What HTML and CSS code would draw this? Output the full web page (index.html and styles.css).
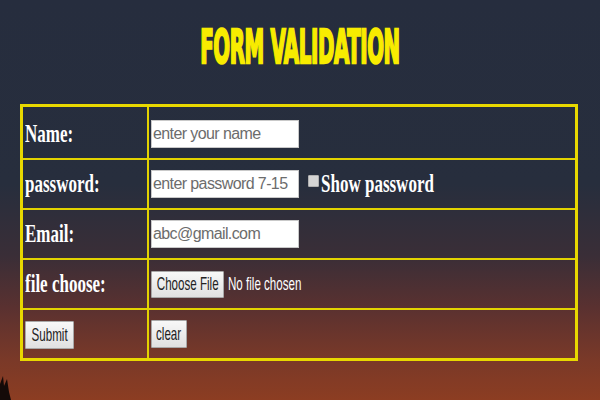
FILE: index.html
```html
<!DOCTYPE html>
<html>
<head>
<meta charset="utf-8">
<link rel="stylesheet" href="styles.css">
</head>
<body>
<h1 class="title"><span class="title-text">FORM VALIDATION</span></h1>
<table class="form-table">
  <tr class="first-row">
    <td class="label"><span class="narrow">Name:</span></td>
    <td class="field"><input class="text" type="text" placeholder="enter your name"></td>
  </tr>
  <tr>
    <td class="label"><span class="narrow">password:</span></td>
    <td class="field"><input class="text" type="password" placeholder="enter password 7-15"><input class="check" type="checkbox" id="show"><label class="show narrow" for="show">Show password</label></td>
  </tr>
  <tr>
    <td class="label"><span class="narrow">Email:</span></td>
    <td class="field"><input class="text" type="text" placeholder="abc@gmail.com"></td>
  </tr>
  <tr>
    <td class="label"><span class="narrow">file choose:</span></td>
    <td class="field"><label class="btn btn-file"><input class="file-input" type="file"><span class="btn-text">Choose File</span></label><span class="file-status">No file chosen</span></td>
  </tr>
  <tr>
    <td class="label"><button class="btn btn-submit"><span class="btn-text">Submit</span></button></td>
    <td class="field"><button class="btn btn-clear"><span class="btn-text">clear</span></button></td>
  </tr>
</table>
<svg class="corner" width="14" height="30" viewBox="0 0 14 30"><path d="M0 30 L0 14 L3 6 L4 16 L7 9 L9 22 L11 30 Z" fill="#140a08"/></svg>
</body>
</html>
```

FILE: styles.css
```css
html, body {
  margin: 0;
}
body {
  width: 600px;
  height: 400px;
  overflow: hidden;
  position: relative;
  background: linear-gradient(to bottom, #262d3e 0%, #272e3d 46%, #3a2e37 64%, #5a3130 77%, #7a3928 90%, #8c3d22 100%);
  font-family: "Liberation Serif", serif;
}
.title {
  margin: 0;
  height: 104px;
  box-sizing: border-box;
  padding-top: 25px;
  display: flex;
  justify-content: center;
  align-items: flex-start;
}
.title-text {
  display: inline-block;
  font-family: "DejaVu Sans Condensed", "DejaVu Sans", sans-serif;
  font-weight: bold;
  font-size: 22px;
  line-height: 1;
  color: #f8ec00;
  -webkit-text-stroke: 1.1px #f8ec00;
  letter-spacing: -0.4px;
  transform: scaleY(2.1);
  transform-origin: 50% 0;
}
.form-table {
  margin-left: 20px;
  width: 558px;
  border-collapse: collapse;
  border: 3px solid #e8d800;
}
.form-table td {
  border: 2px solid #e3d300;
  padding: 0 2px;
  height: 48px;
  vertical-align: middle;
  white-space: nowrap;
}
.form-table .first-row td {
  height: 48px;
  padding-top: 3px;
}
.label {
  width: 120px;
  color: #ffffff;
  font-weight: bold;
  font-size: 25px;
}
.narrow {
  display: inline-block;
  transform: scaleX(0.68);
  transform-origin: 0 50%;
}
.text {
  width: 148px;
  height: 28px;
  box-sizing: border-box;
  border: 1px solid #c9c9c9;
  background: #fff;
  font-family: "Liberation Sans", Arial, sans-serif;
  font-size: 16px;
  letter-spacing: -0.6px;
  padding: 2px 1px;
  vertical-align: middle;
  margin: 0;
  outline: none;
}
.text::placeholder {
  color: #6c6c6c;
}
.check {
  appearance: none;
  -webkit-appearance: none;
  width: 11px;
  height: 12px;
  margin: 0 2px 0 9px;
  background: #d4d4d4;
  border: 1px solid #b0b0b0;
  border-radius: 1px;
  vertical-align: middle;
  position: relative;
  top: -3px;
}
.show {
  font-family: "Liberation Serif", serif;
  font-weight: bold;
  font-size: 25px;
  color: #fff;
  vertical-align: middle;
}
.btn {
  box-sizing: border-box;
  display: inline-flex;
  justify-content: center;
  align-items: center;
  overflow: visible;
  font-family: "Liberation Sans", Arial, sans-serif;
  font-size: 19px;
  color: #222;
  background: linear-gradient(to bottom, #f8f8f8, #e0e0e0);
  border: 1px solid #a8a8a8;
  border-radius: 1px;
  height: 28px;
  padding: 0;
  margin: 0;
  vertical-align: middle;
}
.btn-text {
  display: inline-block;
  white-space: nowrap;
  transform: scaleX(0.61);
  transform-origin: 50% 50%;
}
.btn-submit {
  width: 49px;
}
.btn-clear {
  width: 36px;
}
.btn-file {
  width: 73px;
  height: 27px;
}
.file-input {
  display: none;
}
.file-status {
  display: inline-block;
  font-family: "Liberation Sans", Arial, sans-serif;
  font-size: 19px;
  color: #fff;
  margin-left: 4px;
  vertical-align: middle;
  transform: scaleX(0.61);
  transform-origin: 0 50%;
}
.corner {
  position: absolute;
  left: 0;
  bottom: 0;
}
```
